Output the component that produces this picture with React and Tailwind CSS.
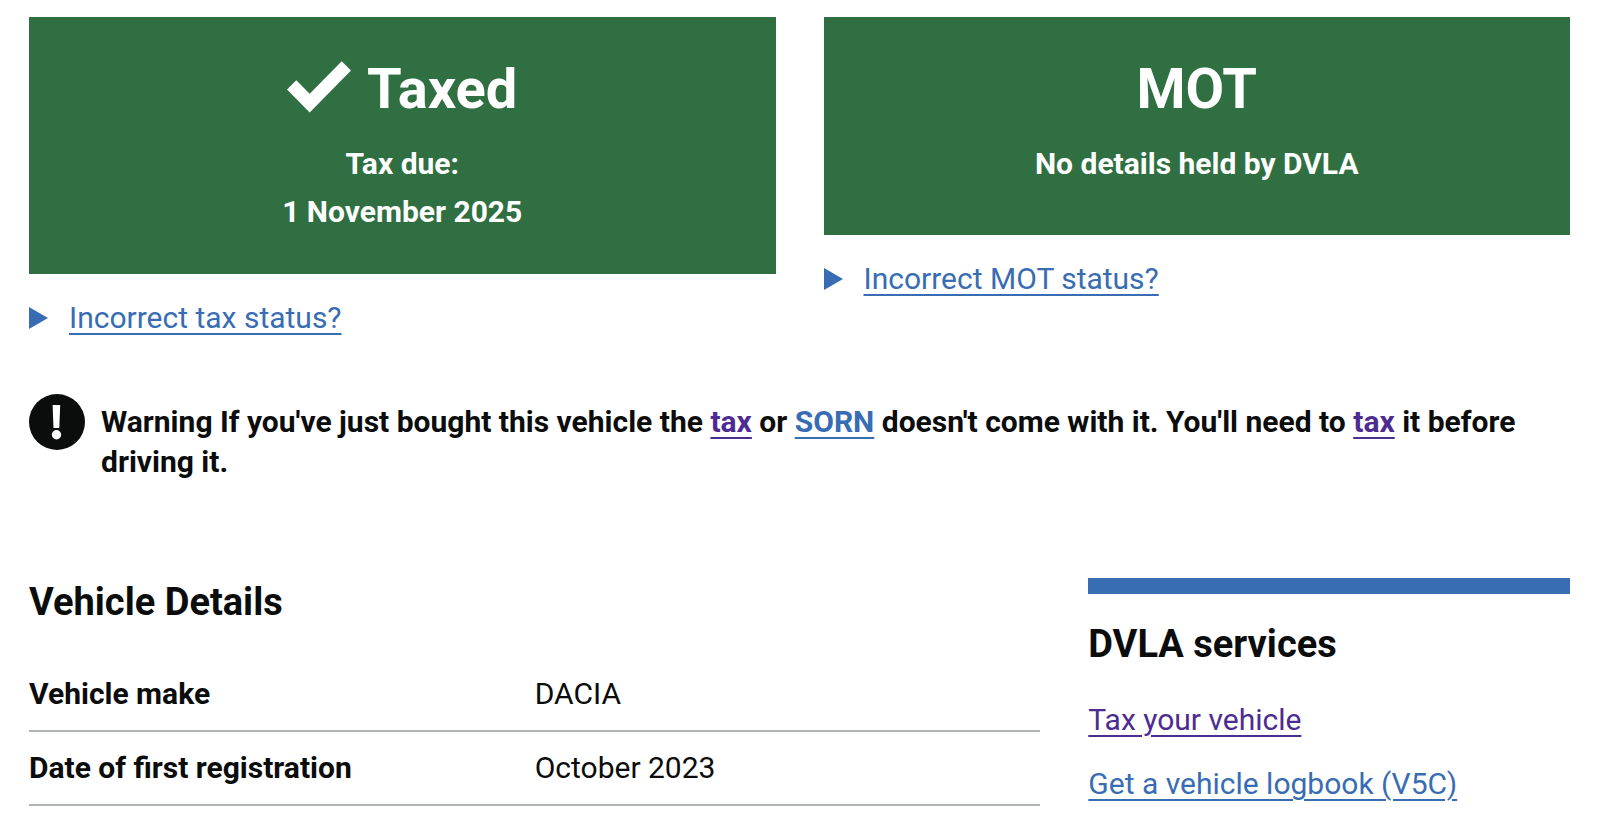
const linkBase = 'underline decoration-2 underline-offset-[5px]';
const linkBlue = `${linkBase} text-[#386db4]`;
const linkVisited = `${linkBase} text-[#4c2c92]`;

const vehicleDetails = [
  ['Vehicle make', 'DACIA'],
  ['Date of first registration', 'October 2023'],
];

function Tick() {
  return (
    <svg viewBox="0 0 64 52" className="mb-1 h-[52px] w-16 shrink-0" fill="currentColor" aria-hidden="true">
      <path d="M0 28.5 9.3 19.2 22.7 32.7 54.7 0.2 64 9.5 22.7 51.5Z" />
    </svg>
  );
}

function WarningIcon() {
  return (
    <svg viewBox="0 0 56 56" className="size-14 shrink-0" aria-hidden="true">
      <circle cx="28" cy="28" r="28" fill="#0b0c0c" />
      <path d="M23.6 11H31.2L30.3 34H24.5Z" fill="#fff" />
      <circle cx="27.5" cy="40.8" r="4.7" fill="#fff" />
    </svg>
  );
}

function Disclosure({ label, children }) {
  return (
    <details className="mt-6">
      <summary className="flex w-fit cursor-pointer list-none items-center gap-[21px] text-[#386db4]">
        <svg viewBox="0 0 19 22" className="h-[22px] w-[19px] shrink-0" fill="currentColor" aria-hidden="true">
          <path d="M0 0 19 11 0 22Z" />
        </svg>
        <span className={linkBlue}>{label}</span>
      </summary>
      <p className="mt-4">{children}</p>
    </details>
  );
}

export default function App() {
  return (
    <main className="bg-white pt-[17px] pr-[30px] pl-[29px] font-['Roboto',sans-serif] text-[30px] leading-10 text-[#0b0c0c]">
      <div className="grid grid-cols-2 items-start gap-12">
        <section>
          <div className="bg-[#2f6f42] px-8 pt-10 pb-[38px] text-center font-bold text-white">
            <h2 className="mb-[19px] flex items-center justify-center gap-4 text-[56px] leading-16">
              <Tick />
              Taxed
            </h2>
            <p className="leading-12">
              Tax due:
              <br />
              1 November 2025
            </p>
          </div>
          <Disclosure label="Incorrect tax status?">Contact DVLA if the tax status is wrong.</Disclosure>
        </section>
        <section>
          <div className="bg-[#2f6f42] px-8 pt-10 pb-[47px] text-center font-bold text-white">
            <h2 className="mb-[19px] text-[56px] leading-16">MOT</h2>
            <p className="leading-12">No details held by DVLA</p>
          </div>
          <Disclosure label="Incorrect MOT status?">Contact DVSA if the MOT status is wrong.</Disclosure>
        </section>
      </div>

      <div className="mt-14 flex gap-4">
        <WarningIcon />
        <p className="pt-2 font-bold">
          Warning If you've just bought this vehicle the{' '}
          <a href="#tax" className={linkVisited}>tax</a> or{' '}
          <a href="#sorn" className={linkBlue}>SORN</a> doesn't come with it. You'll need to{' '}
          <a href="#tax" className={linkVisited}>tax</a> it before driving it.
        </p>
      </div>

      <div className="mt-24 grid grid-cols-3 gap-12">
        <section className="col-span-2">
          <h2 className="mb-8 text-[38px] leading-12 font-bold">Vehicle Details</h2>
          <dl>
            {vehicleDetails.map(([name, value]) => (
              <div key={name} className="grid grid-cols-2 border-b-2 border-[#b1b4b6] py-4">
                <dt className="font-bold">{name}</dt>
                <dd>{value}</dd>
              </div>
            ))}
          </dl>
        </section>
        <aside className="border-t-16 border-[#386db4] pt-[26px]">
          <h2 className="mb-8 text-[38px] leading-12 font-bold">DVLA services</h2>
          <ul className="space-y-6">
            <li><a href="#tax" className={linkVisited}>Tax your vehicle</a></li>
            <li><a href="#v5c" className={linkBlue}>Get a vehicle logbook (V5C)</a></li>
          </ul>
        </aside>
      </div>
    </main>
  );
}
